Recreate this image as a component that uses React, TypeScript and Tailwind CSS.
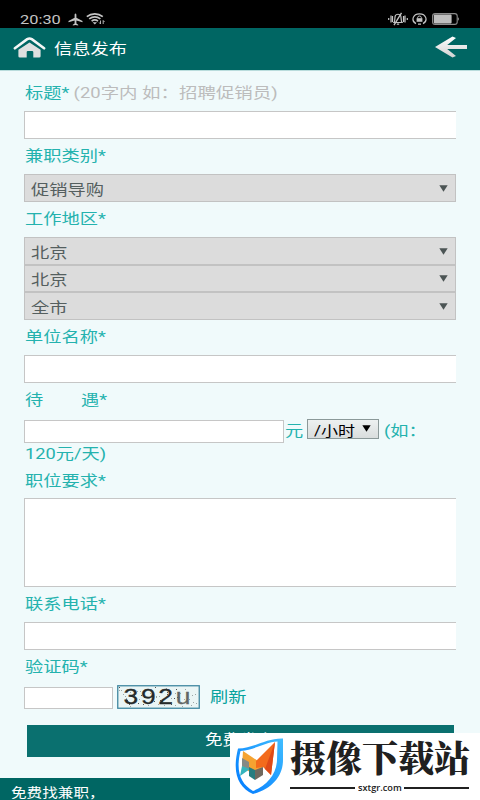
import type { ReactNode } from "react";

function Wide({ children, className = "scale-x-[1.215]" }: { children: ReactNode; className?: string }) {
  return (
    <span className={`inline-block origin-left whitespace-pre ${className}`}>
      {children}
    </span>
  );
}

function Label({ children, className = "h-9" }: { children: ReactNode; className?: string }) {
  return (
    <div className={`flex items-center pb-0.5 pl-px ${className}`}>
      <Wide>{children}</Wide>
    </div>
  );
}

function TextInput({ className = "h-7" }: { className?: string }) {
  return (
    <input
      className={`block w-[432px] border-y border-l border-[#c6c6c6] bg-white outline-none ${className}`}
    />
  );
}

function SelectBox({ value, className = "h-7" }: { value: string; className?: string }) {
  return (
    <div
      className={`flex w-[432px] items-center justify-between border border-[#c2c2c2] bg-[#dcdcdc] pr-[7px] pl-1.5 text-[#555f5f] ${className}`}
    >
      <Wide className="scale-x-[1.215] pt-[3px]">{value}</Wide>
      <svg width="9" height="7" viewBox="0 0 9 7">
        <path d="M0.3 0.3H8.7L4.5 6.8Z" fill="#4c5555" />
      </svg>
    </div>
  );
}

function StatusBar() {
  return (
    <div className="flex h-7 items-end justify-between bg-black pr-[21px] pb-px pl-5 text-[#c4c4c4]">
      <div className="flex h-4 items-center">
        <span className="w-[46px] pt-0.5 text-[13px] leading-4">
          <Wide className="scale-x-[1.26]">20:30</Wide>
        </span>
        <svg width="15" height="13" viewBox="0 0 15 13" className="ml-0.5">
          <path
            d="M7.5 0.5C8.2 0.5 8.4 1.5 8.4 2.3V4.8L14.5 8V9.2L8.4 7.5V10.5L10.2 11.7V12.6L7.5 12L4.8 12.6V11.7L6.6 10.5V7.5L0.5 9.2V8L6.6 4.8V2.3C6.6 1.5 6.8 0.5 7.5 0.5Z"
            fill="currentColor"
          />
        </svg>
        <svg width="20" height="12" viewBox="0 0 20 12" className="ml-[3px]" fill="none" stroke="currentColor">
          <path d="M0.8 3.7C5.5 0 12 0 16.8 3.7M3.2 5.9C6.7 3.3 11 3.3 14.4 5.9M5.6 8.1C7.6 6.6 10 6.6 12 8.1" strokeWidth="1.7" />
          <path d="M6.6 9.2H11L8.8 11.4Z" fill="currentColor" stroke="none" />
          <path d="M14.5 7.5V11M13.2 9.5L14.5 11M17.2 11V7.5M18.5 9L17.2 7.5" strokeWidth="0.9" />
        </svg>
      </div>
      <div className="flex h-4 items-center">
        <svg width="20" height="14" viewBox="0 0 20 14" fill="none" stroke="currentColor">
          <path d="M0.7 6V8M3 3.5V10.5M4.5 4V10M15.5 4V10M17 3.5V10.5M19.3 6V8" strokeWidth="1.2" />
          <path d="M6 10.5C7.3 9.2 6.4 5.5 7.4 3.5C8.3 1.8 11.7 1.8 12.6 3.5C13.6 5.5 12.7 9.2 14 10.5ZM8.8 12.2H11.2" strokeWidth="1.2" />
          <path d="M13.5 0.8L6 13.2" strokeWidth="1.3" />
        </svg>
        <svg width="15" height="12" viewBox="0 0 15 12" className="ml-1" fill="none" stroke="currentColor">
          <path d="M4 10.6C-1.2 7.8 0.7 0.8 7.5 0.8C14.3 0.8 16.2 7.8 11 10.6M6 11.2H9" strokeWidth="1.2" />
          <path d="M5.7 5.5V4.4C5.7 2.6 9.3 2.6 9.3 4.4V5.5" />
          <path d="M4.6 5.2H10.4V8.8H4.6Z" fill="currentColor" stroke="none" />
        </svg>
        <svg width="27" height="12" viewBox="0 0 27 12" className="ml-[5px]">
          <rect x="0.6" y="0.6" width="24.6" height="10.8" rx="2.5" fill="none" stroke="#8c8c8c" strokeWidth="1.1" />
          <rect x="1.8" y="1.6" width="17.8" height="8.8" rx="0.8" fill="#bebebe" />
          <path d="M26.3 4.7V7.3" stroke="#989898" />
        </svg>
      </div>
    </div>
  );
}

function Header() {
  return (
    <header className="flex h-[42px] items-center justify-between bg-[#006663] pr-3 pl-[13px] text-white">
      <div className="flex items-center">
        <svg width="33" height="21" viewBox="0 0 33 21" className="-mt-1">
          <defs>
            <linearGradient id="metal" x1="0" y1="0" x2="0" y2="1">
              <stop offset="0" stopColor="#fff" />
              <stop offset="1" stopColor="#d2d2d2" />
            </linearGradient>
          </defs>
          <path
            d="M16.5 5.4L27.6 12.8V19.3Q27.6 20.5 26.1 20.5H20.3V15Q20.3 14 19.1 14H14.9Q13.7 14 13.7 15V20.5H6.9Q5.4 20.5 5.4 19.3V12.8Z"
            fill="#dedfdf"
          />
          <path
            d="M1.9 11.3L14.2 2.2Q16.5 0.9 18.8 2.2L31.1 11.3"
            fill="none"
            stroke="#f4f6f6"
            strokeWidth="2.6"
            strokeLinecap="round"
          />
        </svg>
        <Wide className="ml-2 scale-x-[1.215] text-[15px]">信息发布</Wide>
      </div>
      <svg width="34" height="22" viewBox="0 0 34 22" className="-mt-1">
        <path
          d="M1 11L18.5 0.6L22 2L13.2 9H33V13H13.2L22 20L18.5 21.4Z"
          fill="url(#metal)"
        />
      </svg>
    </header>
  );
}

// Speckles behind the captcha digits
const specks = Array.from({ length: 60 }, (_, i) => ({
  x: 2 + ((i * 53 + ((i * i * 3) % 11)) % 78),
  y: 2 + ((i * 17 + ((i * i) % 7)) % 20),
  tone: i % 3 === 0 ? "#4f5555" : "#9ba5a5",
}));

function Captcha() {
  return (
    <svg width="83" height="24" viewBox="0 0 83 24" className="ml-1">
      <rect x="0.75" y="0.75" width="81.5" height="22.5" fill="#eaf5f5" stroke="#3f87a0" strokeWidth="1.3" />
      {specks.map((s, i) => (
        <rect key={i} x={s.x} y={s.y} width="1" height="1" fill={s.tone} />
      ))}
      <text
        transform="translate(6.5 18.5) scale(1.2 1)"
        className="font-['Liberation_Sans',sans-serif] text-[22px]"
        fill="#252a2a"
        stroke="#252a2a"
        strokeWidth="0.3"
      >
        <tspan x="0">3</tspan>
        <tspan x="14.5">9</tspan>
        <tspan x="29">2</tspan>
        <tspan x="43.5" fill="#606666" stroke="#606666">u</tspan>
      </text>
    </svg>
  );
}

function Watermark() {
  return (
    <div className="absolute top-[733px] left-[230px] flex h-[67px] w-[250px] overflow-hidden bg-white text-[#202020]">
      <svg width="56" height="67" viewBox="0 0 56 67" className="shrink-0">
        <defs>
          <linearGradient id="shield" x1="0" y1="1" x2="1" y2="0">
            <stop offset="0" stopColor="#0079ff" />
            <stop offset="1" stopColor="#40bdff" />
          </linearGradient>
        </defs>
        <path
          fillRule="evenodd"
          d="M8 15.5C25 15 36 5 53 5.5V27C53 43 42 56 23 61C8 54 2 40 8 15.5ZM10.5 18C5.5 38 10.5 51 23 58C36 53 46.5 42 47 27L47.5 8.5C35 9 25 17 10.5 18Z"
          fill="url(#shield)"
        />
        <path d="M13 18L31 30L33 37L23 41L12 34Z" fill="#f5a331" />
        <path d="M12 25L19 29L19 37L12 33Z" fill="#858a86" />
        <path d="M26 28L45 9L41 42L33 34L26 35Z" fill="#f36b1c" />
        <path d="M45 9L41 42L35 36Z" fill="#df4a18" />
        <path d="M12 33L20 36L10 43Z" fill="#35b4bd" />
        <path d="M19 34L25 37V47L19 43Z" fill="#267c7f" />
        <path d="M25 37L33 34V42L25 47Z" fill="#70685e" />
      </svg>
      <div className="ml-[4px] w-[180px] pt-1">
        <div className="mb-1.5 font-['Noto_Serif_CJK_SC','Noto_Sans_CJK_SC',serif] text-[36px] leading-[40px] font-black whitespace-nowrap">
          摄像下载站
        </div>
        <div className="flex items-center font-['Open_Sans',sans-serif] text-[9px] leading-[10px] font-semibold">
          <span className="h-0.5 w-[65px] shrink-0 bg-[#202020]" />
          <span className="w-[49px] shrink-0 pl-[3px]">
            <span className="inline-block origin-left scale-x-[1.02]">sxtgr.com</span>
          </span>
          <span className="h-0.5 w-[65px] bg-[#202020]" />
        </div>
      </div>
    </div>
  );
}

export default function App() {
  return (
    <div className="relative h-[800px] w-[480px] overflow-hidden bg-[#f0fafb] font-['Roboto','Noto_Sans_CJK_SC',sans-serif] text-[15px] leading-5 text-[#24b2ae]">
      <StatusBar />
      <Header />

      <main className="h-[708px] border-t border-[#b9dcdc] pl-6">
        <div className="flex h-10 items-center pt-[3px] pl-px">
          <Wide>标题*</Wide>
          <Wide className="ml-2 scale-x-[1.23] text-[#bcbcbc]"> (20字内 如：招聘促销员)</Wide>
        </div>
        <TextInput />
        <Label className="h-[35px]">兼职类别*</Label>
        <SelectBox value="促销导购" />
        <Label className="h-[35px]">工作地区*</Label>
        <SelectBox value="北京" />
        <SelectBox value="北京" className="h-[27px]" />
        <SelectBox value="全市" />
        <Label className="h-[35px]">单位名称*</Label>
        <TextInput />
        <Label className="h-[35px]">
          待<span className="inline-block w-[31px]" />遇*
        </Label>

        <div className="flex h-6 items-center">
          <input className="mt-[3px] block h-[23px] w-[260px] shrink-0 border border-[#c6c6c6] bg-white outline-none" />
          <span className="w-[23px] pt-px pl-px"><Wide>元</Wide></span>
          <div className="-mt-0.5 flex h-5 w-[72px] shrink-0 items-center justify-between border border-[#8b9999] bg-linear-to-b from-[#edf1f1] to-[#d9dddd] pr-[7px] pl-1.5 text-[14px] text-black">
            <Wide className="scale-x-[1.215] pt-[3px]">/小时</Wide>
            <svg width="9" height="7" viewBox="0 0 9 7" className="-mt-0.5">
              <path d="M0.3 0.3H8.7L4.5 6.8Z" />
            </svg>
          </div>
          <span className="pt-px pl-[5px]"><Wide>(如：</Wide></span>
        </div>
        <Label className="h-[26px]">120元/天)</Label>
        <Label className="mb-[3px] h-[27px]">职位要求*</Label>
        <textarea className="block h-[89px] w-[432px] resize-none border-y border-l border-[#c6c6c6] bg-white outline-none" />
        <Label className="h-[35px]">联系电话*</Label>
        <TextInput />
        <Label className="h-[35px]">验证码*</Label>

        <div className="flex h-6 items-center">
          <input className="mt-0.5 block h-[22px] w-[89px] border border-[#c6c6c6] bg-white outline-none" />
          <Captcha />
          <a className="ml-2.5 text-[#08a39d]"><Wide>刷新</Wide></a>
        </div>

        <button className="mt-4 ml-[3px] block h-8 w-[427px] bg-[#0a706f] pb-0.5 pl-[178px] text-left text-white">
          <Wide className="scale-x-[1.17]">免费发布</Wide>
        </button>
      </main>

      <footer className="flex h-[22px] items-end bg-[#006663] pl-[11px] text-[13px] leading-[14px] text-white">
        <Wide className="scale-x-[1.2]">免费找兼职，</Wide>
      </footer>
      <Watermark />
    </div>
  );
}
